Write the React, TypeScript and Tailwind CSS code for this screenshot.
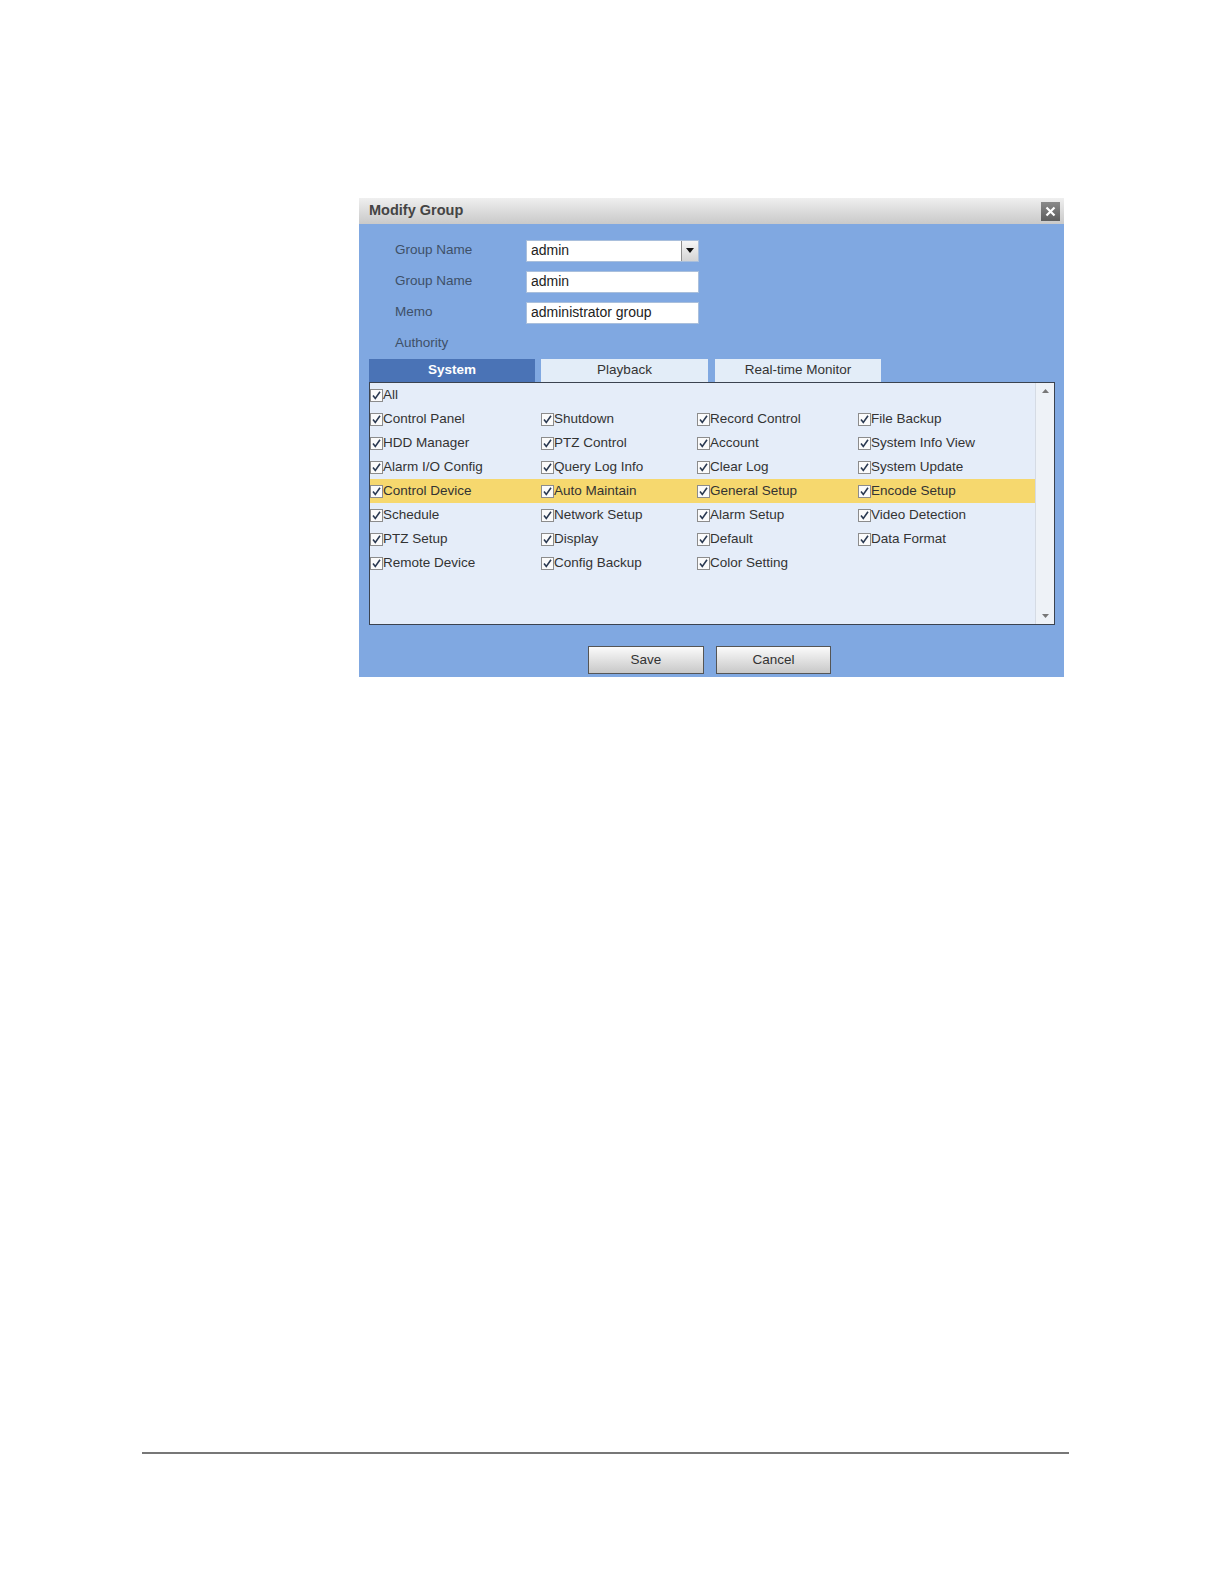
import React from 'react';

const font = { fontFamily: '"Liberation Sans", Arial, sans-serif' };

const rows: string[][] = [
  ['Control Panel', 'Shutdown', 'Record Control', 'File Backup'],
  ['HDD Manager', 'PTZ Control', 'Account', 'System Info View'],
  ['Alarm I/O Config', 'Query Log Info', 'Clear Log', 'System Update'],
  ['Control Device', 'Auto Maintain', 'General Setup', 'Encode Setup'],
  ['Schedule', 'Network Setup', 'Alarm Setup', 'Video Detection'],
  ['PTZ Setup', 'Display', 'Default', 'Data Format'],
  ['Remote Device', 'Config Backup', 'Color Setting', ''],
];

function Check() {
  return (
    <svg width="13" height="13" viewBox="0 0 13 13" className="shrink-0">
      <rect x="0.5" y="0.5" width="12" height="12" fill="#fbfbfb" stroke="#8c8c8c" />
      <path d="M3 6.5 L5.3 9.5 L10 2.8" fill="none" stroke="#2b3a52" strokeWidth="1.6" />
    </svg>
  );
}

function Item({ label }: { label: string }) {
  if (!label) return <div />;
  return (
    <div className="flex items-center">
      <Check />
      <span className="text-[13.5px] text-[#333] leading-none">{label}</span>
    </div>
  );
}

function Field({ label, children }: { label: string; children?: React.ReactNode }) {
  return (
    <div className="flex items-center h-[31px]">
      <div className="w-[131px] text-[13.5px] text-[#3e5068]">{label}</div>
      {children}
    </div>
  );
}

function TextBox({ value }: { value: string }) {
  return (
    <div className="w-[173px] h-[22px] bg-white border border-[#a9bfdc] flex items-center px-1 text-[14px] text-[#222]">
      {value}
    </div>
  );
}

export default function App() {
  return (
    <div className="w-[1224px] h-[1584px] bg-white" style={font}>
      <div className="pt-[198px] pl-[359px]">
        <div className="w-[705px] h-[479px] bg-[#80a8e1] flex flex-col">
          {/* title bar */}
          <div className="h-[26px] flex items-center justify-between pl-[10px] pr-[4px] bg-gradient-to-b from-[#efefef] to-[#c9c9c9]">
            <span className="text-[14.5px] font-bold text-[#444]">Modify Group</span>
            <div className="w-[19px] h-[19px] bg-gradient-to-b from-[#8a8a8a] to-[#5e5e5e] flex items-center justify-center">
              <svg width="11" height="11" viewBox="0 0 11 11">
                <path d="M1.5 1.5 L9.5 9.5 M9.5 1.5 L1.5 9.5" stroke="#fff" strokeWidth="2.2" />
              </svg>
            </div>
          </div>

          {/* form */}
          <div className="pt-[11px] pl-[36px]">
            <Field label="Group Name">
              <div className="w-[173px] h-[22px] bg-white border border-[#a9bfdc] flex items-center">
                <span className="flex-1 px-1 text-[14px] text-[#222]">admin</span>
                <div className="w-[17px] h-[20px] bg-gradient-to-b from-[#f6f6f6] to-[#d4d4d4] border-l border-[#8e8e8e] flex items-center justify-center">
                  <svg width="8" height="5" viewBox="0 0 8 5">
                    <path d="M0 0 H8 L4 5 Z" fill="#111" />
                  </svg>
                </div>
              </div>
            </Field>
            <Field label="Group Name">
              <TextBox value="admin" />
            </Field>
            <Field label="Memo">
              <TextBox value="administrator group" />
            </Field>
            <Field label="Authority" />
          </div>

          {/* tabs */}
          <div className="flex pl-[10px] h-[24px] items-start">
            <div className="w-[166px] h-[23px] bg-[#4a73b6] text-white font-bold text-[13.5px] flex items-center justify-center">
              System
            </div>
            <div className="ml-[6px] w-[167px] h-[23px] bg-[#e3edf8] text-[#333] text-[13.5px] flex items-center justify-center">
              Playback
            </div>
            <div className="ml-[7px] w-[166px] h-[23px] bg-[#e3edf8] text-[#333] text-[13.5px] flex items-center justify-center">
              Real-time Monitor
            </div>
          </div>

          {/* authority list */}
          <div className="mx-[10px] mr-[9px] h-[243px] border border-[#3b4350] bg-[#e5edf9] flex -mt-px">
            <div className="flex-1 flex flex-col">
              <div className="h-[24px] flex items-center">
                <Item label="All" />
              </div>
              {rows.map((r, i) => (
                <div
                  key={i}
                  className={`h-[24px] grid grid-cols-[171px_156px_161px_1fr] items-center ${i === 3 ? 'bg-[#f6d86e]' : ''}`}
                >
                  {r.map((c, j) => (
                    <Item key={j} label={c} />
                  ))}
                </div>
              ))}
            </div>
            <div className="w-[19px] bg-[#eef2f7] border-l border-[#d5dbe4] flex flex-col items-center justify-between py-[6px]">
              <svg width="7" height="4" viewBox="0 0 7 4">
                <path d="M0 4 H7 L3.5 0 Z" fill="#777" />
              </svg>
              <svg width="7" height="4" viewBox="0 0 7 4">
                <path d="M0 0 H7 L3.5 4 Z" fill="#777" />
              </svg>
            </div>
          </div>

          {/* buttons */}
          <div className="flex justify-center gap-[12px] pt-[21px] pr-[4px]">
            <button className="w-[116px] h-[28px] border border-[#555] bg-gradient-to-b from-[#fbfbfb] to-[#c8c8c8] text-[13.5px] text-[#333]">
              Save
            </button>
            <button className="w-[115px] h-[28px] border border-[#555] bg-gradient-to-b from-[#fbfbfb] to-[#c8c8c8] text-[13.5px] text-[#333]">
              Cancel
            </button>
          </div>
        </div>
      </div>

      {/* footer rule */}
      <div className="mt-[775px] ml-[142px] w-[927px] h-[2px] bg-[#777]" />
    </div>
  );
}
